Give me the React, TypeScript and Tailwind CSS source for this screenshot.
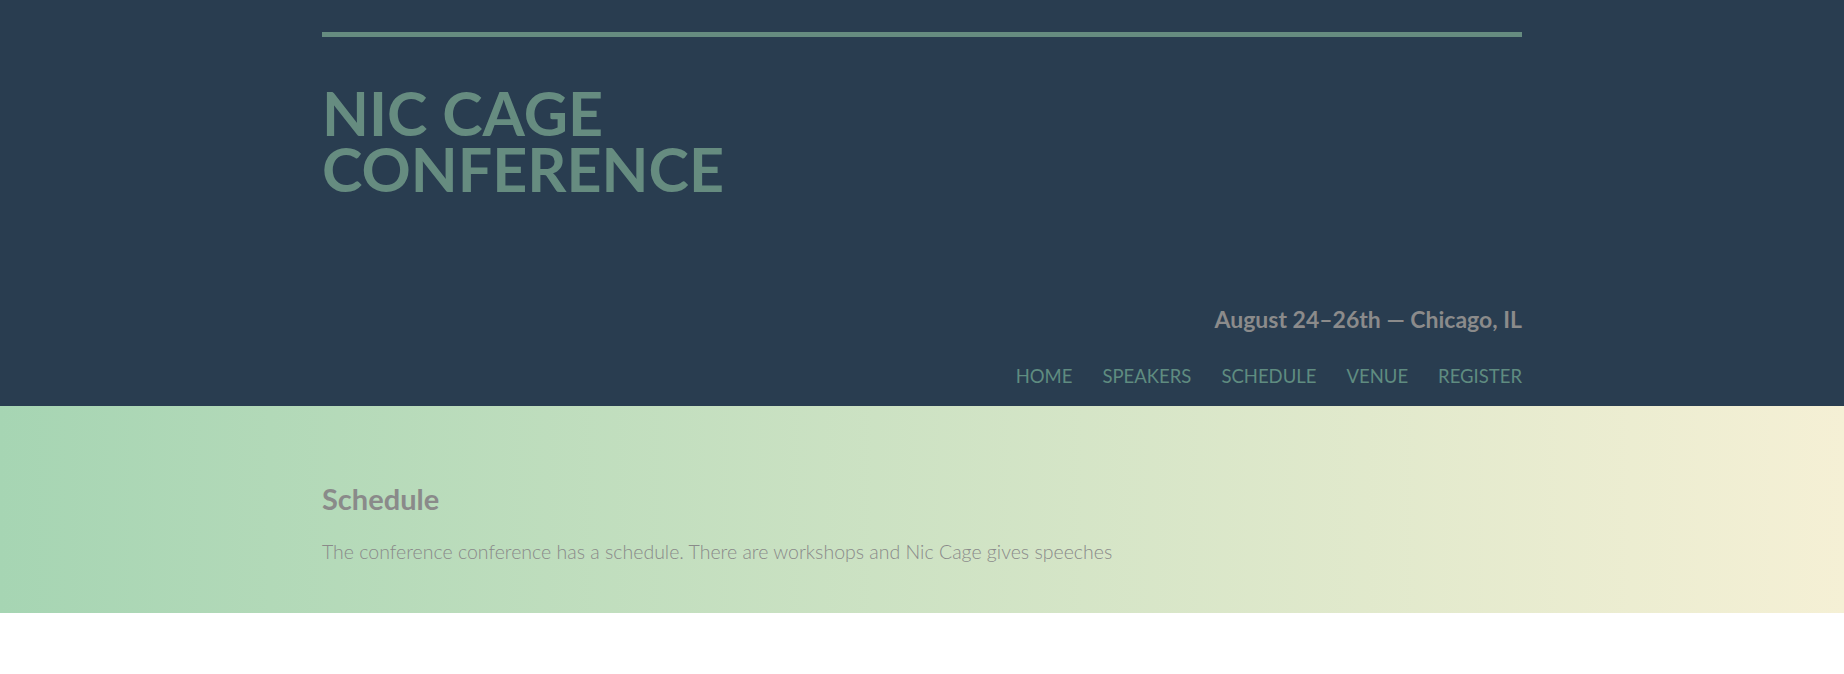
const navItems = ['Home', 'Speakers', 'Schedule', 'Venue', 'Register'];

const App = () => {
  return (
    <div className="min-h-screen bg-white font-['Lato','Noto_Sans',sans-serif]">
      <header className="bg-[#293d50] pt-8 pb-[19px]">
        <div className="mx-auto w-[1200px] border-t-[5px] border-[#668c80]">
          <h1 className="mt-12 text-[61px] font-bold uppercase leading-[56px] text-[#668c80]">
            Nic Cage
            <br />
            Conference
          </h1>
          <p className="mt-[109px] text-right text-[23px] font-bold leading-[1.2] text-[#8b8b8b]">
            August 24–26th — Chicago, IL
          </p>
          <nav className="mt-[31px] flex justify-end gap-[30px]">
            {navItems.map((item) => (
              <a key={item} href="#" className="text-[18.5px] uppercase leading-[1.2] text-[#5f8c80]">
                {item}
              </a>
            ))}
          </nav>
        </div>
      </header>

      <section className="bg-gradient-to-r from-[#a6d5b3] to-[#f5f0d5] pt-[76px] pb-[48px]">
        <div className="mx-auto w-[1200px]">
          <h2 className="text-[29px] font-bold leading-[1.2] text-[#8a8a8a]">Schedule</h2>
          <p className="mt-[21px] text-[19.5px] font-light leading-[1.4] text-[#8a8a8a]">
            The conference conference has a schedule. There are workshops and Nic Cage gives speeches
          </p>
        </div>
      </section>
    </div>
  );
};

export default App;
